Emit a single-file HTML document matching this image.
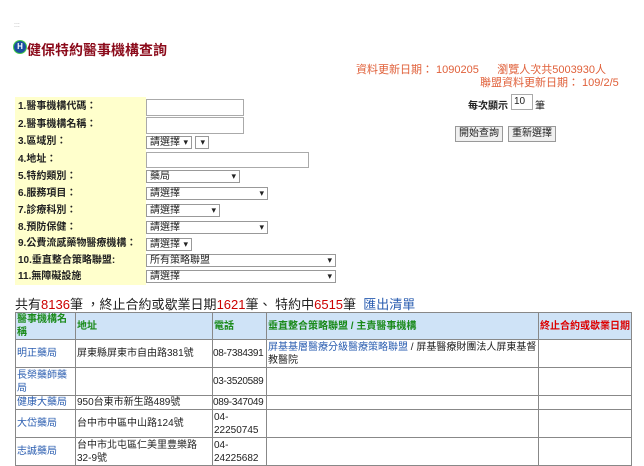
<!DOCTYPE html>
<html><head><meta charset="utf-8"><style>
body{margin:0;width:644px;height:464px;overflow:hidden;background:#fff;font-family:"Liberation Sans","Noto Sans CJK TC",sans-serif;font-size:11px;color:#222;position:relative}
.a{position:absolute;white-space:nowrap}
.lab{position:absolute;left:15px;width:131px;height:17px;line-height:17px;font-weight:bold;font-size:10px;padding-left:3px;box-sizing:border-box;background:#ffffcc}
.in{position:absolute;height:15px;border:1px solid #aaa;box-sizing:border-box;background:#fff}
.sel{position:absolute;height:13px;border:1px solid #999;box-sizing:border-box;background:#fff;font-size:10px;line-height:11px;padding-left:3px}
.sel:after{content:"▾";position:absolute;right:3px;top:0;font-size:9px}
table{position:absolute;left:15px;top:312px;width:616px;border-collapse:collapse;table-layout:fixed}
td{border:1px solid #888;font-size:10px;vertical-align:middle;padding:0 1px;line-height:13px;overflow:hidden}
td.ph{white-space:nowrap;padding:0;letter-spacing:-0.3px}
th{border:1px solid #888;background:#cfe3f7;color:#1a8a1a;font-size:10px;text-align:left;padding:0 1px;line-height:13px;height:25px}
.lk{color:#2a5db0}
.btn{position:absolute;height:16px;border:1px solid #999;background:#f0f0f0;font-size:10px;line-height:14px;padding:0 3px;box-sizing:border-box}
</style></head><body>
<div class="a" style="left:14px;top:22px;font-size:7px;color:#aaa">:::</div>
<div class="a" style="left:14px;top:41px;width:12px;height:12px;border-radius:50%;background:#1a4fa0;color:#fff;font-size:8px;line-height:12px;text-align:center;font-weight:bold;box-shadow:0 0 0 1px #4c4">H</div>
<div class="a" style="left:27px;top:40px;font-size:14px;font-weight:bold;color:#8b0a1a">健保特約醫事機構查詢</div>
<div class="a" style="left:356px;top:61px;font-size:11px;color:#e0603a">資料更新日期： 1090205 &nbsp;&nbsp;&nbsp;&nbsp;&nbsp;瀏覽人次共5003930人</div>
<div class="a" style="left:480px;top:74px;font-size:11px;color:#e0603a">聯盟資料更新日期： 109/2/5</div>
<div class="a" style="left:468px;top:97px;font-size:10px;font-weight:bold">每次顯示</div>
<div class="in" style="left:511px;top:94px;width:22px;height:16px;font-size:10px;padding-left:2px;line-height:14px">10</div>
<div class="a" style="left:535px;top:97px;font-size:10px">筆</div>
<div class="btn" style="left:455px;top:126px">開始查詢</div>
<div class="btn" style="left:508px;top:126px">重新選擇</div>
<div style="position:absolute;left:15px;top:97px;width:131px;height:188px;background:#ffffcc"></div>
<div class="lab" style="top:98px">1.醫事機構代碼：</div>
<div class="lab" style="top:116px">2.醫事機構名稱：</div>
<div class="lab" style="top:133px">3.區域別：</div>
<div class="lab" style="top:151px">4.地址：</div>
<div class="lab" style="top:168px">5.特約類別：</div>
<div class="lab" style="top:185px">6.服務項目：</div>
<div class="lab" style="top:202px">7.診療科別：</div>
<div class="lab" style="top:219px">8.預防保健：</div>
<div class="lab" style="top:235px">9.公費流感藥物醫療機構：</div>
<div class="lab" style="top:252px">10.垂直整合策略聯盟:</div>
<div class="lab" style="top:268px">11.無障礙設施</div>
<div class="in" style="left:146px;top:99px;width:98px;height:17px"></div>
<div class="in" style="left:146px;top:117px;width:98px;height:17px"></div>
<div class="sel" style="left:146px;top:136px;width:46px">請選擇</div>
<div class="sel" style="left:195px;top:136px;width:14px"></div>
<div class="in" style="left:146px;top:152px;width:163px;height:16px"></div>
<div class="sel" style="left:146px;top:170px;width:94px">藥局</div>
<div class="sel" style="left:146px;top:187px;width:122px">請選擇</div>
<div class="sel" style="left:146px;top:204px;width:74px">請選擇</div>
<div class="sel" style="left:146px;top:221px;width:122px">請選擇</div>
<div class="sel" style="left:146px;top:238px;width:46px">請選擇</div>
<div class="sel" style="left:146px;top:254px;width:190px">所有策略聯盟</div>
<div class="sel" style="left:146px;top:270px;width:190px">請選擇</div>
<div class="a" style="left:15px;top:294px;font-size:13px">共有<span style="color:#c00">8136</span>筆 ，終止合約或歇業日期<span style="color:#c00">1621</span>筆、 特約中<span style="color:#c00">6515</span>筆 &nbsp;<span class="lk">匯出清單</span></div>
<table>
<colgroup><col style="width:60px"><col style="width:137px"><col style="width:54px"><col style="width:272px"><col style="width:93px"></colgroup>
<tr><th>醫事機構名稱</th><th>地址</th><th>電話</th><th>垂直整合策略聯盟 / 主責醫事機構</th><th style="color:#d00">終止合約或歇業日期</th></tr>
<tr style="height:28px"><td class="lk">明正藥局</td><td>屏東縣屏東市自由路381號</td><td class="ph">08-7384391</td><td><span class="lk">屏基基層醫療分級醫療策略聯盟</span> / 屏基醫療財團法人屏東基督教醫院</td><td></td></tr>
<tr style="height:28px"><td class="lk">長榮藥師藥局</td><td></td><td class="ph">03-3520589</td><td></td><td></td></tr>
<tr style="height:14px"><td class="lk">健康大藥局</td><td>950台東市新生路489號</td><td class="ph">089-347049</td><td></td><td></td></tr>
<tr style="height:28px"><td class="lk">大岱藥局</td><td>台中市中區中山路124號</td><td>04-<br>22250745</td><td></td><td></td></tr>
<tr style="height:28px"><td class="lk">志誠藥局</td><td>台中市北屯區仁美里豊樂路32-9號</td><td>04-<br>24225682</td><td></td><td></td></tr>
</table>
</body></html>
